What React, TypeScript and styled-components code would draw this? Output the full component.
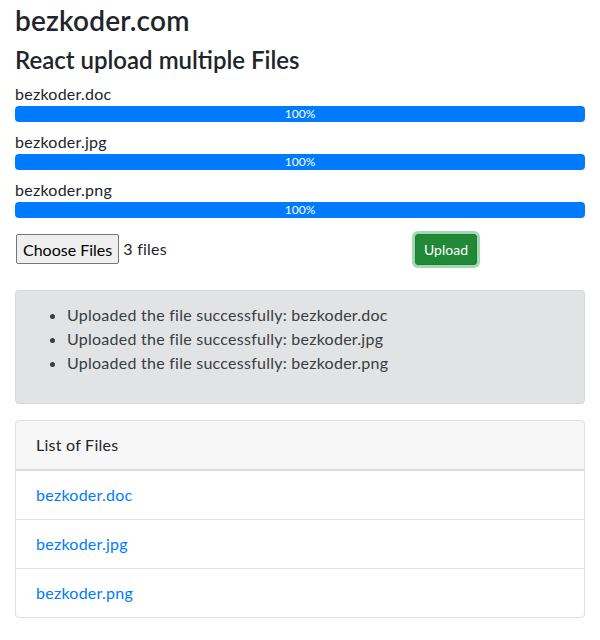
import styled, { createGlobalStyle } from 'styled-components'

const GlobalStyle = createGlobalStyle`
  html, body {
    margin: 0;
    padding: 0;
    background: #fff;
  }
  body {
    font-family: 'Segoe UI', Lato, 'Liberation Sans', sans-serif;
    font-size: 16px;
    line-height: 1.5;
    letter-spacing: 0.25px;
    color: #212529;
  }
  * { box-sizing: border-box; }
`

const files = ['bezkoder.doc', 'bezkoder.jpg', 'bezkoder.png']

export default function App() {
  return (
    <Container>
      <GlobalStyle />
      <SiteTitle>bezkoder.com</SiteTitle>
      <PageTitle>React upload multiple Files</PageTitle>

      {files.map((name) => (
        <ProgressBlock key={name}>
          <span>{name}</span>
          <Progress>
            <ProgressBar style={{ width: '100%' }}>100%</ProgressBar>
          </Progress>
        </ProgressBlock>
      ))}

      <ControlsRow>
        <FileCol>
          <FakeFileButton type="button">Choose Files</FakeFileButton>
          <FileCount>3 files</FileCount>
        </FileCol>
        <ButtonCol>
          <UploadButton type="button">Upload</UploadButton>
        </ButtonCol>
      </ControlsRow>

      <Alert role="alert">
        <MessageList>
          {files.map((name) => (
            <li key={name}>Uploaded the file successfully: {name}</li>
          ))}
        </MessageList>
      </Alert>

      <Card>
        <CardHeader>List of Files</CardHeader>
        <FileList>
          {files.map((name) => (
            <FileItem key={name}>
              <FileLink href="#">{name}</FileLink>
            </FileItem>
          ))}
        </FileList>
      </Card>
    </Container>
  )
}

const Container = styled.div`
  padding: 4px 15px 20px;
`

const SiteTitle = styled.h3`
  margin: 0 0 8px;
  font-size: 28px;
  font-weight: 600;
  line-height: 1.2;
  letter-spacing: 0.2px;
`

const PageTitle = styled.h4`
  margin: 0 0 8px;
  font-size: 24px;
  font-weight: 600;
  line-height: 1.2;
  letter-spacing: 0;
`

const ProgressBlock = styled.div`
  margin-bottom: 8px;
`

const Progress = styled.div`
  display: flex;
  height: 16px;
  overflow: hidden;
  background-color: #e9ecef;
  border-radius: 4px;
  font-size: 12px;
  letter-spacing: 0;
`

const ProgressBar = styled.div`
  display: flex;
  justify-content: center;
  align-items: center;
  background-color: #007bff;
  color: #fff;
  white-space: nowrap;
`

const ControlsRow = styled.div`
  display: flex;
  margin: 14px -15px 24px;
  height: 34px;
  align-items: center;
`

const FileCol = styled.div`
  flex: 0 0 66.6667%;
  padding: 0 15px;
  display: flex;
  align-items: center;
`

const ButtonCol = styled.div`
  flex: 0 0 33.3333%;
  padding: 0 15px;
`

const FakeFileButton = styled.button`
  height: 30px;
  padding: 0 6px;
  margin-left: 1px;
  font-family: inherit;
  font-size: 16px;
  letter-spacing: 0;
  color: #000;
  background: #efefef;
  border: 1px solid #767676;
  border-radius: 2px;
`

const FileCount = styled.span`
  margin-left: 4px;
`

const UploadButton = styled.button`
  padding: 4px 8px;
  font-family: inherit;
  font-size: 14px;
  line-height: 1.5;
  color: #fff;
  background-color: #218838;
  border: 1px solid #1e7e34;
  border-radius: 3px;
  box-shadow: 0 0 0 3px rgba(72, 180, 97, 0.5);
`

const Alert = styled.div`
  padding: 12px 20px;
  margin-bottom: 16px;
  color: #383d41;
  background-color: #e2e3e5;
  border: 1px solid #d6d8db;
  border-radius: 4px;
`

const MessageList = styled.ul`
  margin: 0 0 16px;
  padding-left: 31px;
`

const Card = styled.div`
  border: 1px solid rgba(0, 0, 0, 0.125);
  border-radius: 4px;
  overflow: hidden;
`

const CardHeader = styled.div`
  padding: 12px 20px;
  background-color: rgba(0, 0, 0, 0.03);
  border-bottom: 1px solid rgba(0, 0, 0, 0.125);
`

const FileList = styled.ul`
  margin: 0;
  padding: 0;
  list-style: none;
`

const FileItem = styled.li`
  padding: 12px 20px;
  border-top: 1px solid rgba(0, 0, 0, 0.125);
`

const FileLink = styled.a`
  color: #007bff;
  text-decoration: none;
`
